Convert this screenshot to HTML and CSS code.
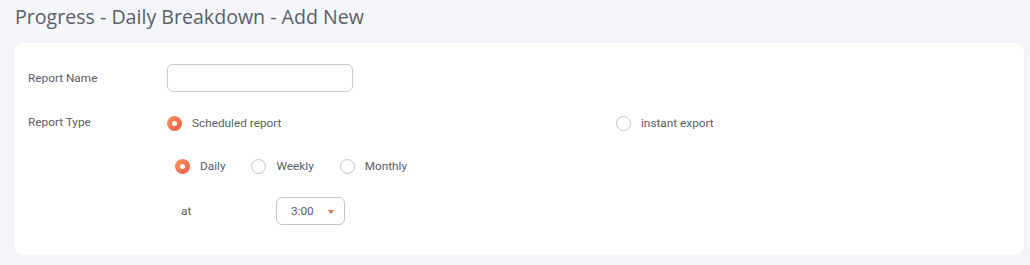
FILE: index.html
```html
<!DOCTYPE html>
<html lang="en">
<head>
  <meta charset="UTF-8" />
  <meta name="viewport" content="width=device-width, initial-scale=1" />
  <title>Progress - Daily Breakdown - Add New</title>
  <link rel="stylesheet" href="styles.css">
</head>
<body>

<h1 class="page-title">Progress - Daily Breakdown - Add New</h1>

<div class="card">
  <div class="form-row row-name">
    <label class="field-label" for="reportName">Report Name</label>
    <input type="text" id="reportName" class="text-input" />
  </div>

  <div class="form-row row-type">
    <span class="field-label">Report Type</span>
    <div class="radio-group">
      <label class="radio-option option-wide">
        <span class="radio checked"></span>
        Scheduled report
      </label>
      <label class="radio-option">
        <span class="radio"></span>
        instant export
      </label>
    </div>
  </div>

  <div class="form-row row-freq">
    <span class="field-label"></span>
    <div class="radio-group freq-group">
      <label class="radio-option">
        <span class="radio checked"></span>
        Daily
      </label>
      <label class="radio-option">
        <span class="radio"></span>
        Weekly
      </label>
      <label class="radio-option">
        <span class="radio"></span>
        Monthly
      </label>
    </div>
  </div>

  <div class="form-row row-time">
    <span class="field-label"></span>
    <span class="at-label">at</span>
    <div class="time-select">
      <span>3:00</span>
      <span class="caret"></span>
    </div>
  </div>
</div>

</body>
</html>
```

FILE: styles.css
```css
body {
  margin: 0;
  background: #f5f6fb;
  font-family: Roboto, "Liberation Sans", sans-serif;
  font-size: 11.8px;
  color: #5a5e64;
}

.page-title {
  margin: 0;
  padding: 4px 0 0 15px;
  height: 39px;
  box-sizing: border-box;
  font-family: "Open Sans", "Noto Sans", sans-serif;
  font-weight: 400;
  font-size: 19.6px;
  line-height: 26px;
  color: #5b6066;
}

.card {
  background: #fff;
  margin: 4px 6px 0 14px;
  border-radius: 8px;
  padding: 21px 14px 30px;
  box-shadow: 0 1px 3px rgba(120, 130, 160, 0.08);
}

.form-row {
  display: flex;
  align-items: center;
}

.field-label {
  width: 139px;
  flex-shrink: 0;
}

.row-name {
  height: 28px;
}

.row-name .field-label {
  margin-top: 0;
}

.row-type {
  height: 20px;
  margin-top: 21px;
}

.row-type .field-label {
  margin-top: -2px;
}

.row-freq {
  height: 20px;
  margin-top: 23px;
}

.row-time {
  height: 28px;
  margin-top: 21px;
}

.text-input {
  width: 186px;
  height: 28px;
  box-sizing: border-box;
  border: 1px solid #c9ccd1;
  border-radius: 6px;
  outline: none;
  padding: 0 10px;
}

.radio-group {
  display: flex;
  align-items: center;
}

.radio-option {
  display: flex;
  align-items: center;
  gap: 10px;
  margin-right: 26px;
}

.option-wide {
  width: 449px;
  margin-right: 0;
}

.freq-group {
  padding-left: 8px;
}

.radio {
  width: 15px;
  height: 15px;
  box-sizing: border-box;
  border: 1px solid #c3c6cb;
  border-radius: 50%;
  position: relative;
  flex-shrink: 0;
}

.radio.checked {
  border: none;
  background: linear-gradient(135deg, #f8955d, #ee5a4e);
}

.radio.checked::after {
  content: "";
  position: absolute;
  left: 5px;
  top: 5px;
  width: 5px;
  height: 5px;
  border-radius: 50%;
  background: #fff;
}

.at-label {
  width: 95px;
  padding-left: 14px;
  flex-shrink: 0;
}

.time-select {
  width: 69px;
  height: 28px;
  box-sizing: border-box;
  border: 1px solid #c3c6cb;
  border-radius: 6px;
  display: flex;
  align-items: center;
  padding-left: 14px;
  gap: 14px;
}

.caret {
  width: 0;
  height: 0;
  border-left: 3.5px solid transparent;
  border-right: 3.5px solid transparent;
  border-top: 4px solid #f36a50;
  margin-top: 1px;
}
```
